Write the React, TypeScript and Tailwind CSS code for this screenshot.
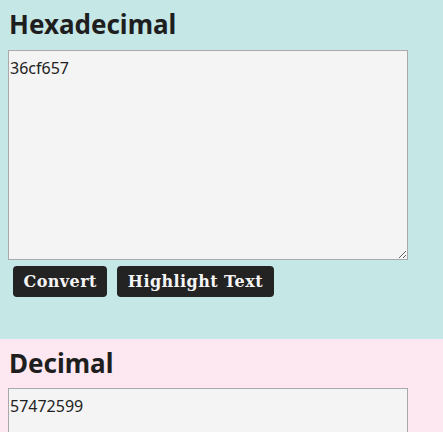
import React from "react";

export default function App() {
  const headFont = { fontFamily: '"Noto Sans", "Open Sans", sans-serif' };
  return (
    <div className="w-[443px] h-[432px] overflow-hidden" style={headFont}>
      <section className="bg-[#c5e7e6] h-[339px] px-2 pt-[5px]">
        <h2 className="text-[26px] leading-[38px] font-bold text-[#1e1e1e] pl-px">Hexadecimal</h2>
        <textarea
          className="mt-[7px] block w-[400px] h-[210px] bg-[#f4f4f4] border border-[#a9a9a9] text-[16px] leading-[22px] text-[#222] px-px pt-[6px] outline-none"
          style={{ fontFamily: '"Noto Sans", "Open Sans", sans-serif' }}
          defaultValue="36cf657"
        />
        <div className="flex gap-[10px] mt-[6px] pl-[5px]">
          <button
            className="h-[31px] px-[10.5px] rounded-[4px] bg-[#232323] text-[#f5f5f5] text-[16px] tracking-[0.43px] font-bold"
            style={{ fontFamily: '"DejaVu Serif", serif' }}
          >
            Convert
          </button>
          <button
            className="h-[31px] px-[10.5px] rounded-[4px] bg-[#232323] text-[#f5f5f5] text-[16px] tracking-[0.43px] font-bold"
            style={{ fontFamily: '"DejaVu Serif", serif' }}
          >
            Highlight Text
          </button>
        </div>
      </section>
      <section className="bg-[#fde7f0] h-[93px] px-2 pt-[5px]">
        <h2 className="text-[26px] leading-[38px] font-bold text-[#1e1e1e] pl-px">Decimal</h2>
        <textarea
          className="mt-[6px] block w-[400px] h-[210px] bg-[#f4f4f4] border border-[#a9a9a9] text-[16px] leading-[22px] text-[#222] px-px pt-[6px] outline-none"
          style={{ fontFamily: '"Noto Sans", "Open Sans", sans-serif' }}
          defaultValue="57472599"
        />
      </section>
    </div>
  );
}
